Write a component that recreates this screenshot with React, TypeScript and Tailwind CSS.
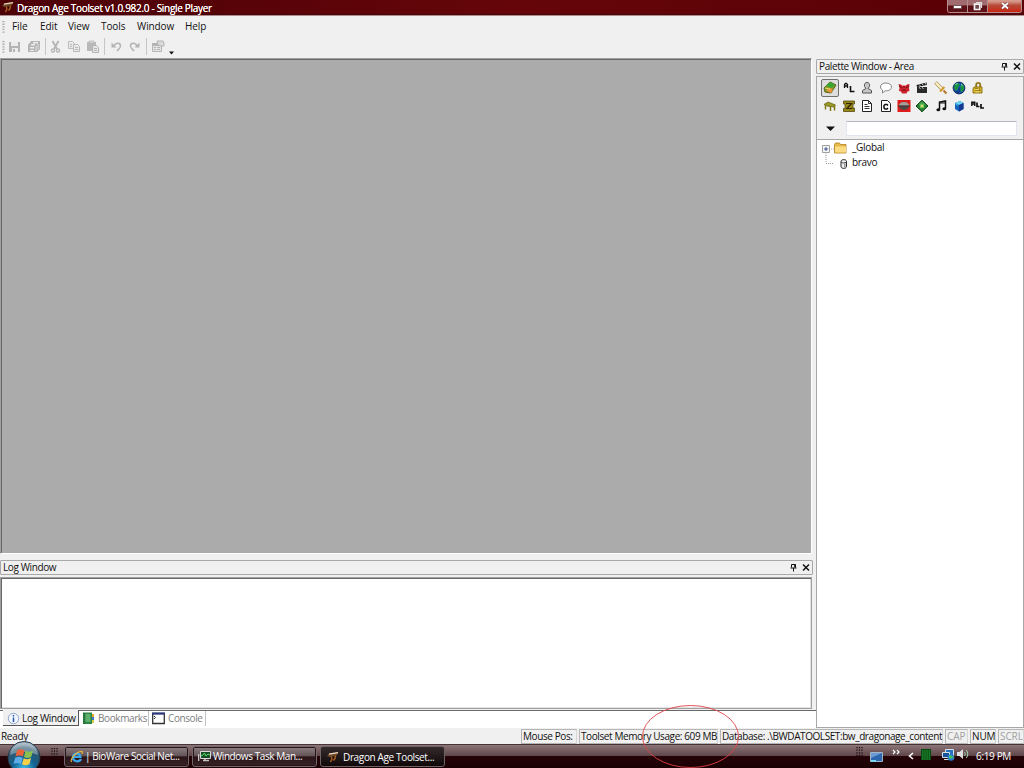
import React from 'react';
import clsx from 'clsx';

type IconProps = { children: React.ReactNode; w?: number; h?: number; className?: string };

const Svg: React.FC<IconProps> = ({ children, w = 14, h = 14, className }) => (
    <svg width={w} height={h} viewBox={`0 0 ${w} ${h}`} className={clsx('block shrink-0', className)} fill="none">
        {children}
    </svg>
);

const DragonIcon = () => (
    <Svg w={12} h={12}>
        <path d="M0 5 2 2.5 11.5 1 10 4 7 5.5 3 6z" fill="#6e4a2a" />
        <path d="M2 3.2 11 1.6" stroke="#ecd9c2" strokeWidth="1.3" />
        <path d="M4.500 5.500 5 8l-1.500 3M8.500 4.500 8 7.500 6.500 9.500" stroke="#b0621f" strokeWidth="1.4" />
        <path d="M6 5 6.500 8" stroke="#2b1208" strokeWidth="1.2" />
    </Svg>
);

/* ---------- title bar ---------- */

const TitleBar = () => (
    <header className="flex h-4 shrink-0 justify-between border-b border-[#b08a8c] bg-linear-to-r from-[#4c0207] via-[#650509] to-[#590106] shadow-[inset_0_-1px_0_#42070a]">
        <div className="flex items-start gap-[3px] pl-[2px] pt-px">
            <DragonIcon />
            <span className="whitespace-nowrap text-[10px] leading-[14px] tracking-[-0.3px] text-white [text-shadow:0_0_.4px_#fff]">Dragon Age Toolset v1.0.982.0 - Single Player</span>
        </div>
        <div className="mr-[2px] flex h-[13px] overflow-hidden rounded-b-[3px] border border-t-0 border-[#b58d8f]">
            <div className="flex w-5 items-end justify-center border-r border-[#b58d8f] bg-linear-to-b from-[#a16c70] from-40% to-[#5c1116] to-50% pb-[3px]">
                <div className="h-[4px] w-[9px] rounded-[1px] border border-[#73565a] bg-white" />
            </div>
            <div className="flex w-5 items-center justify-center border-r border-[#b58d8f] bg-linear-to-b from-[#a16c70] from-40% to-[#5c1116] to-50%">
                <Svg w={10} h={10}>
                    <path d="M3 1.500h5.500v5.500" stroke="#ddd" strokeWidth="1.2" />
                    <path d="M1.500 3.200h5.300v5.300H1.500z" fill="#6d4a4d" stroke="#f4f4f4" strokeWidth="1.7" />
                </Svg>
            </div>
            <div className="flex w-[33px] items-center justify-center bg-linear-to-b from-[#d59a8c] from-10% via-[#b54937] via-45% to-[#c9200b]">
                <Svg w={10} h={10}>
                    <path d="m2 2 6 5.500M8 2 2 7.500" stroke="#5f3435" strokeWidth="3" />
                    <path d="m2 2 6 5.500M8 2 2 7.500" stroke="#fff" strokeWidth="1.8" />
                </Svg>
            </div>
        </div>
    </header>
);

/* ---------- menu and toolbar ---------- */

const Grip = () => (
    <Svg w={3} h={14}>
        <path d="M1.500 1v12" stroke="#a8a8a8" strokeWidth="2" strokeDasharray="1.3 1.3" />
    </Svg>
);

const MENUS = [
    { label: 'File', width: 'w-[28px]' },
    { label: 'Edit', width: 'w-[28px]' },
    { label: 'View', width: 'w-[33px]' },
    { label: 'Tools', width: 'w-9' },
    { label: 'Window', width: 'w-12' },
    { label: 'Help', width: 'w-8' },
];

const MenuBar = () => (
    <nav className="flex h-[21px] shrink-0 items-center pl-[2px]">
        <Grip />
        <div className="ml-[7px] flex">
            {MENUS.map(m => (
                <span key={m.label} className={clsx(m.width, 'whitespace-nowrap text-[10px] tracking-[-0.1px]')}>{m.label}</span>
            ))}
        </div>
    </nav>
);

const Sep = () => <div className="h-[17px] w-px bg-[#c6c6c6]" />;

const ToolBar = () => (
    <div className="flex h-[21px] shrink-0 items-center pb-[2px] pl-[2px]">
        <Grip />
        <div className="ml-[3px] flex w-[37px] gap-[5px] opacity-85">
            <Svg>
                <path d="M1 2h11v10H1z" fill="#aaa" />
                <path d="M3 2h7v4H3zM4 8h6v4H4z" fill="#ececec" />
                <path d="M5 9h2v3H5z" fill="#aaa" />
            </Svg>
            <Svg>
                <path d="M4 1h9v8l-3 3H1V5z" fill="#aaa" />
                <path d="M6 2h5v1.5H6zM4 4h4v1.5H4zM3 7h4v1.5H3zM3 10h4v1H3z" fill="#ededed" />
                <path d="M9 6v5M11 4v5" stroke="#ddd" />
            </Svg>
        </div>
        <Sep />
        <div className="ml-[3px] flex w-[55px] gap-[4px] opacity-85">
            <Svg>
                <path d="m3.500 1 4.500 8M9.500 1 5 9" stroke="#aaa" strokeWidth="1.8" />
                <circle cx="4" cy="10.500" r="1.600" stroke="#aaa" strokeWidth="1.400" />
                <circle cx="9" cy="10.500" r="1.600" stroke="#aaa" strokeWidth="1.400" />
            </Svg>
            <Svg>
                <path d="M1.500 1.500h4l2 2v5h-6z" fill="#e8e8e8" stroke="#b5b5b5" />
                <path d="M6.500 4.500h4l2 2v5h-6z" fill="#e8e8e8" stroke="#b0b0b0" />
                <path d="M8 7.500h3M8 9.500h3M3 4.500h2M3 6.500h2" stroke="#b0b0b0" />
            </Svg>
            <Svg className="ml-px">
                <path d="M1 2h9v9H1z" fill="#b0b0b0" />
                <path d="M3 1h5v2H3z" fill="#d5d5d5" stroke="#aaa" strokeWidth=".6" />
                <path d="M6.500 5.500h4l2 2v5h-6z" fill="#e4e4e4" stroke="#a8a8a8" />
                <path d="M8 8.500h3M8 10.500h3" stroke="#aaa" />
            </Svg>
        </div>
        <Sep />
        <div className="ml-[5px] flex w-[36px] gap-[4px] opacity-85">
            <Svg>
                <path d="M4 6c1-3 6-4 6.500-.5C11 8 8.500 9 7 11" stroke="#aaa" strokeWidth="1.600" />
                <path d="M1.500 2.500v5h5z" fill="#aaa" />
            </Svg>
            <Svg>
                <path d="M9 6C8 3 3 2 2.500 5.500 2 8 4.500 9 6 11" stroke="#aaa" strokeWidth="1.600" />
                <path d="M11.500 2.500v5h-5z" fill="#aaa" />
            </Svg>
        </div>
        <Sep />
        <div className="ml-1 flex items-end gap-1">
            <Svg className="opacity-85">
                <path d="M1.500 4.500h9v7h-9z" fill="#e3e3e3" stroke="#aaa" />
                <path d="M1 3h7v3H1z" fill="#aaa" />
                <path d="M6 1h6l1 2v3H9L7 5z" fill="#d6d6d6" stroke="#aaa" />
                <path d="M3 7.500h2M6 7.500h3M3 9.500h2M6 9.500h3" stroke="#aaa" />
            </Svg>
            <Svg w={6} h={4} className="-mb-px">
                <path d="M0 .5h5L2.500 3.500z" fill="#111" />
            </Svg>
        </div>
    </div>
);

/* ---------- docked windows ---------- */

const DockTitle: React.FC<{ title: string }> = ({ title }) => (
    <div className="flex h-[15px] shrink-0 items-center justify-between rounded-[1px] border border-[#a9a9a9] bg-[#f0f0f0] pl-[2px] pr-[2px]">
        <span className="whitespace-nowrap text-[10px] leading-[13px] tracking-[-0.38px]">{title}</span>
        <div className="flex gap-[5px]">
            <Svg w={7} h={9}>
                <path d="M1.500 1.500h4v3M1.500 1.500v3M.5 5h6M3.500 5v3.500" stroke="#111" />
                <path d="M4.900 1.500v3" stroke="#111" strokeWidth="1.400" />
            </Svg>
            <Svg w={8} h={9}>
                <path d="m1 1.500 6 6M7 1.500l-6 6" stroke="#111" strokeWidth="1.500" />
            </Svg>
        </div>
    </div>
);

const TABS = [
    {
        label: 'Log Window', width: 'w-[76px]', active: true,
        icon: (
            <Svg w={13} h={13}>
                <circle cx="6.500" cy="6.500" r="5.200" fill="#f2f7fd" stroke="#8ea6cc" />
                <path d="M6.500 3v1.500M6.500 5.500V10" stroke="#2a57ae" strokeWidth="1.500" />
            </Svg>
        ),
    },
    {
        label: 'Bookmarks', width: 'w-[70px]', active: false,
        icon: (
            <Svg w={13} h={13}>
                <path d="M9 2h3v3H9z" fill="#e9a62c" />
                <path d="M9 5h3v3H9z" fill="#3b74c0" />
                <path d="M9 8h3v3H9z" fill="#d4d04a" />
                <path d="M1 .5h9v11.500H1z" fill="#2f8546" />
                <path d="M3.500 2h5v8h-5z" fill="#5eae6c" />
                <path d="M2 1v11" stroke="#164f28" strokeDasharray="1 1" />
            </Svg>
        ),
    },
    {
        label: 'Console', width: 'w-[57px]', active: false,
        icon: (
            <Svg w={13} h={13}>
                <path d="M.7 1.500h11.600v10H.7z" fill="#fff" stroke="#333" strokeWidth="1.300" />
                <path d="M0 1.500h13" stroke="#28357f" strokeWidth="2" />
                <path d="m2 4 1.500 1.500L2 7" stroke="#333" />
            </Svg>
        ),
    },
];

const LogWindow = () => (
    <section className="flex h-[168px] shrink-0 flex-col">
        <div className="-mr-px">
            <DockTitle title="Log Window" />
        </div>
        <div className="mt-[2px] h-[132px] shrink-0 border border-[#a0a0a0] bg-white shadow-[inset_1px_1px_0_#696969,inset_-1px_-1px_0_#e3e3e3]" />
        <div className="-mr-1 mt-px flex h-[18px] bg-white pl-[3px] shadow-[inset_0_1px_0_#696969]">
            {TABS.map(t => (
                <div
                    key={t.label}
                    className={clsx(
                        t.width,
                        'flex items-center whitespace-nowrap text-[10px]',
                        t.active
                            ? 'h-4 gap-[2px] border-r border-b border-[#555] bg-[#f0f0f0] pl-[4px] pt-px tracking-[-0.33px]'
                            : 'mt-px h-[15px] gap-[3px] border-r border-[#c2c2c2] pl-[3px] tracking-[-0.4px] text-[#808080]',
                    )}
                >
                    {t.icon}
                    <span>{t.label}</span>
                </div>
            ))}
        </div>
    </section>
);

/* ---------- palette ---------- */

const PALETTE_ICONS: React.ReactNode[] = [
    <>
        <path d="m1 7 6-6 6 3-5 8-6-1z" fill="#8a9b25" stroke="#596318" />
        <path d="m3 5 4-4 5 3-3 3z" fill="#39a833" />
        <path d="m4 8 4-1 2 2-2 3-4-2z" fill="#ec923c" />
        <path d="m2 7 5 1" stroke="#d9df6f" />
    </>,
    <>
        <path d="M2.500 7V3.500l1-1h1l1 1V7M2.500 5h3" stroke="#111" strokeWidth="1.300" />
        <path d="M8.500 5v5.500h4" stroke="#111" strokeWidth="1.600" />
    </>,
    <>
        <path d="M7 1.500c-2 0-3 1.500-2.500 4L6 7.500l-3.500 2v2.500h9V9.500L8 7.500l1.500-2C10 3 9 1.500 7 1.500z" fill="#c7c7c7" stroke="#555" />
    </>,
    <>
        <path d="M7 2C3.500 2 1.500 3.500 1.500 6c0 1.500 1 2.500 2 3v3L6 9.800c4 .2 6.500-1.300 6.500-3.800S10 2 7 2z" fill="#fff" stroke="#858585" />
    </>,
    <>
        <path d="m1.500 3 2.500.5 2 1.500 1-1 1 1 2-1.500 2.500-.5-.5 4 .5 3-2 .5-1 2H5l-1-2-2-.5.500-3z" fill="#d0222c" />
        <path d="m2 5 3 2M12 5 9 7M5 10l2-1.500L9 10M7 5v2" stroke="#6e1015" />
    </>,
    <>
        <path d="M2 6h10v6H2z" fill="#292929" />
        <path d="m1.500 4 10-2.500.5 2.500-10 2z" fill="#171717" />
        <path d="m4 3.500 1.500 1.500M7 2.800l1.500 1.500M10 2l1 1.500M4 6.500l1.500 1M7 6.500l1.500 1" stroke="#ddd" />
    </>,
    <>
        <path d="m1.500 1.500 7 7" stroke="#a98b4c" strokeWidth="3.400" />
        <path d="m1.800 1.800 6.700 6.700" stroke="#fff6cc" strokeWidth="2" />
        <path d="m6 10.500 4.500-4.500" stroke="#d09a2c" strokeWidth="2" />
        <path d="m9.500 9.500 3 3" stroke="#b5742a" strokeWidth="2" />
    </>,
    <>
        <circle cx="7" cy="7" r="5.900" fill="#1450ad" stroke="#0d2350" strokeWidth=".9" />
        <path d="m3 3 3-1 2 2-2 2v2L4 10 2 7zM9 2l3 3v3l-2 3-2-1 1-2-1-2 1-1z" fill="#1c963b" />
        <path d="m3.500 3.500 2-1M9 3.500l1.500 1" stroke="#9fe0e2" />
        <path d="M7 7v4M4 10l3 2" stroke="#0c2d75" />
    </>,
    <>
        <path d="M5.200 6V3.800c0-2.600 4-2.600 4 0V6" stroke="#94791a" strokeWidth="1.900" />
        <path d="M3 6h8v6H2V8z" fill="#dcb928" stroke="#81690f" strokeWidth=".9" />
        <path d="M4 7.500h3M4 9.500h6M8.500 7v5" stroke="#8f7416" strokeWidth=".8" />
        <path d="M4.500 8.500h3M4.500 10.800h5" stroke="#f5e989" strokeWidth=".8" />
    </>,
    <>
        <path d="m1 5.500 4-2.500 7.500 3L11 8 4 7z" fill="#9b9826" stroke="#696313" strokeWidth=".8" />
        <path d="M2.500 6v4.500M7.500 7v5M11.500 7v4.500" stroke="#7f7a14" strokeWidth="1.500" />
    </>,
    <>
        <path d="M1.500 2h11v3H11v4h1.500v3.500h-11V9.500H3V5H1.500z" fill="#96861b" stroke="#574d0d" strokeWidth=".8" />
        <path d="M4 4.500h5.500L5 9.500h5.500" stroke="#332b05" strokeWidth="1.200" />
    </>,
    <>
        <path d="M2.500 1.500h6l3 3v8h-9z" fill="#fff" stroke="#222" />
        <path d="M8.500 1.500v3h3M4.500 5.500h3M4.500 7.500h5M4.500 9.500h5" stroke="#333" />
    </>,
    <>
        <path d="M2.500 1.500h6l3 3v8h-9z" fill="#fff" stroke="#222" />
        <path d="M9 6.500 8 5.500H6L5 6.500V9l1 1h2l1-1" stroke="#111" strokeWidth="1.500" />
    </>,
    <>
        <path d="M.5 1h13v12H.5z" fill="#df1c1b" />
        <path d="M2 7c0-3 2-4 5-4s5 1 5 4z" fill="#a49b98" />
        <path d="M2 7h10c0 2-2 4-5 4S2 9 2 7z" fill="#514744" />
        <path d="M1 7h12" stroke="#372a28" />
    </>,
    <>
        <path d="m7 1.200 6 5.800-6 5.800L1 7z" fill="#277e32" stroke="#0d4a18" />
        <path d="m3.500 5.500 3.500-3 3.500 3L7 7z" fill="#3fa14c" />
        <path d="M4.800 4.800h4.400v4.400H4.800z" fill="#6cc25a" />
        <path d="M6 6h2v2H6z" fill="#e5dd6a" />
    </>,
    <>
        <path d="M5.500 10.500V3.200l6-1.200v7.500" stroke="#111" strokeWidth="1.500" />
        <path d="M5 4h7" stroke="#111" />
        <ellipse cx="4.300" cy="10.700" rx="1.900" ry="1.500" fill="#111" />
        <ellipse cx="10.300" cy="9.700" rx="1.900" ry="1.500" fill="#111" />
    </>,
    <>
        <path d="m3 4 5-2 3.500 2v6L7 12.500 3 10z" fill="#1565bd" />
        <path d="m3 4 5-2 3.500 2L7 6z" fill="#6ed6f2" />
        <path d="m7 6 4.500-2v6L7 12.500z" fill="#163a91" />
        <path d="M3.500 5 6 6.500" stroke="#45b8ea" />
    </>,
    <>
        <path d="M.8 7V3.200h3V7M.8 5h3" stroke="#111" strokeWidth="1.400" />
        <path d="M6 3.500v4h2.500M10 5v4h3" stroke="#111" strokeWidth="1.700" />
    </>,
];

const PalettePanel = () => (
    <aside className="flex w-[208px] shrink-0 flex-col pt-px">
        <DockTitle title="Palette Window - Area" />
        <div className="mt-[2px] flex min-h-0 flex-1 flex-col border border-[#a7a7a7]">
            <div className="h-[63px] shrink-0 border-b border-[#a7a7a7] pl-1 pt-[2px]">
                <div className="grid w-[166px] grid-cols-9">
                    {PALETTE_ICONS.map((icon, i) => (
                        <div
                            key={i}
                            className={clsx('flex h-[18px] items-center justify-center', i === 0 && 'rounded-[2px] border border-[#6f6f6f] bg-[#dedede]')}
                        >
                            <Svg>{icon}</Svg>
                        </div>
                    ))}
                </div>
                <div className="mt-[6px] flex items-center pl-[5px]">
                    <Svg w={9} h={5}>
                        <path d="M0 .5h9L4.500 5z" fill="#111" />
                    </Svg>
                    <div className="ml-[11px] h-[15px] w-[171px] border border-[#e1e5ee] border-t-[#b4b9c4] bg-white" />
                </div>
            </div>
            <div className="flex-1 bg-white pl-[5px] text-[10px] tracking-[-0.3px]">
                <div className="flex h-[15px] items-center">
                    <Svg w={12} h={15}>
                        <path d="M.5 5.500h7v7h-7z" fill="#f5f5f5" stroke="#a0a0a0" />
                        <path d="M2 9h4M4 7v4" stroke="#3d548e" />
                        <path d="M9 9h3M4 13.500V15" stroke="#aaa" strokeDasharray="1 1" />
                    </Svg>
                    <Svg w={13} h={12} className="mt-px">
                        <path d="M.5 2.500 1.500 1h4l1 1.500h5.500v8.500H.5z" fill="#e9b94b" stroke="#ac7e20" strokeWidth=".8" />
                        <path d="M1 4.500h11v6H1z" fill="#fbdc82" />
                    </Svg>
                    <span className="ml-[5px] leading-[15px]">_Global</span>
                </div>
                <div className="flex h-[15px] items-center">
                    <Svg w={12} h={15}>
                        <path d="M4 0v8M4 8.500h8" stroke="#999" strokeDasharray="1 1" />
                    </Svg>
                    <Svg w={13} h={12} className="mt-[2px]">
                        <path d="M7 3.500c0-2.500 5.500-2.500 5.500 0v5c0 2.500-5.500 2.500-5.500 0z" fill="#eee" stroke="#222" />
                        <path d="M7 4c2 1.300 3.500 1.300 5.500 0" stroke="#444" />
                        <path d="M10.800 5.500v4" stroke="#999" strokeWidth="1.500" />
                    </Svg>
                    <span className="ml-[5px] leading-[15px]">bravo</span>
                </div>
            </div>
        </div>
    </aside>
);

/* ---------- status bar ---------- */

const STATUS = [
    { text: 'Mouse Pos:', cls: 'w-14 tracking-[-0.4px]' },
    { text: 'Toolset Memory Usage: 609 MB', cls: 'w-[139px] tracking-[-0.4px]' },
    { text: 'Database: .\\BWDATOOLSET:bw_dragonage_content', cls: 'w-[223px] tracking-[-0.42px]' },
    { text: 'CAP', cls: 'w-[23px] text-[#a0a0a0]' },
    { text: 'NUM', cls: 'w-[26px] tracking-[-0.1px]' },
    { text: 'SCRL', cls: 'w-[26px] tracking-[-0.1px] text-[#a0a0a0]' },
];

const StatusBar = () => (
    <div className="flex h-4 shrink-0 items-center justify-between bg-[#f0f0f0] text-[10px]">
        <span className="pl-px tracking-[-0.3px]">Ready</span>
        <div className="flex gap-[2px]">
            {STATUS.map(s => (
                <div key={s.text} className={clsx('h-[15px] shrink-0 whitespace-nowrap border border-[#b5b5b5] border-r-[#d5d5d5] pl-px leading-[13px]', s.cls)}>
                    {s.text}
                </div>
            ))}
        </div>
    </div>
);

/* ---------- taskbar ---------- */

const StartOrb = () => (
    <svg width="36" height="28" viewBox="0 0 36 28" className="absolute -top-[4px] left-[6px]">
        <defs>
            <radialGradient id="orb" cx=".5" cy=".85" r=".8">
                <stop offset="0" stopColor="#3cbdee" />
                <stop offset=".45" stopColor="#12628e" />
                <stop offset=".8" stopColor="#31556d" />
                <stop offset="1" stopColor="#9eb1bd" />
            </radialGradient>
        </defs>
        <circle cx="18" cy="16.500" r="16" fill="url(#orb)" stroke="#273a49" />
        <path d="M4 14C5 5 12 2 18 2s13 3 14 12c-9-4-19-4-28 0z" fill="#dce8ee" opacity=".4" />
        <path d="M11 9.500c3-2 5-1.500 7.500-.3L17 15.500c-2.500-1.300-5-1.300-7.500 0z" fill="#e8633a" />
        <path d="M19.500 9.800c2.500 1.200 5 1.200 7.500-.3l-1.700 6.300c-2.500 1.500-5 1.500-7.300.3z" fill="#8dc14f" />
        <path d="M9.200 16.800c2.500-1.300 5-1.300 7.500 0L15 23c-2.500-1.300-5-1.300-7.500 0z" fill="#5eabe8" />
        <path d="M17.700 17.300c2.500 1.200 5 1.200 7.400-.2L23.500 23c-2.500 1.500-5 1.500-7.500.3z" fill="#f7cf48" />
    </svg>
);

const Dots = () => (
    <Svg w={7} h={17} className="mt-[2px]">
        <path d="M1 0v17M3.500 0v17M6 0v17" stroke="#180a0c" strokeWidth="1.200" strokeDasharray="1.200 1.400" />
    </Svg>
);

const TASKS = [
    {
        label: '| BioWare Social Net...', active: false,
        icon: (
            <Svg w={13} h={13}>
                <path d="M11 9c-1.500 3.500-8 3-8-1.500S9.500 2 10.500 7H4" stroke="#3aa7ec" strokeWidth="2.200" />
                <path d="M1.500 12C-.5 9 7 1 12 1.500c1 1-.3 2.500-.3 2.500" stroke="#f1ba3a" strokeWidth="1.100" />
            </Svg>
        ),
    },
    {
        label: 'Windows Task Man...', active: false,
        icon: (
            <Svg w={13} h={13}>
                <path d="M2.500 1.500h10v7h-10z" fill="#184a25" stroke="#d8d8d8" />
                <path d="m3 6 2-1 1.500-2L8 6l2-2 2 1" stroke="#56e267" />
                <path d="M5 10.500h6M.5 4v7M7 9v2" stroke="#c4c4c4" strokeWidth="1.600" />
            </Svg>
        ),
    },
    { label: 'Dragon Age Toolset...', active: true, icon: <DragonIcon /> },
];

const Tray = () => (
    <div className="flex h-full items-start text-white">
        <Dots />
        <Svg w={14} h={13} className="ml-[7px] mt-[6px]">
            <path d="M.5 1.500h12v9H.5z" fill="#2c66ae" stroke="#a3b6c8" />
            <path d="M1 2h11L1 7z" fill="#6a9bd2" />
            <path d="M1 10h5" stroke="#79d7f4" strokeWidth="2" />
        </Svg>
        <Svg w={9} h={7} className="ml-[8px] mt-[4px]">
            <path d="m1 1 2 2-2 2M5 1l2 2-2 2" stroke="#fff" strokeWidth="1.200" />
        </Svg>
        <Svg w={6} h={8} className="ml-[7px] mt-[7px]">
            <path d="M5 1 1.500 4 5 7" stroke="#fff" strokeWidth="1.600" />
        </Svg>
        <Svg w={10} h={11} className="ml-[7px] mt-[4px]">
            <path d="M0 0h10v11H0z" fill="#0b4714" />
            <path d="M1 2h8M1 4h8M1 6h8M1 8h8M1 10h8" stroke="#24a735" strokeDasharray="1.500 .7" />
        </Svg>
        <Svg w={13} h={12} className="ml-[11px] mt-[4px]">
            <path d="M3.500.5h8v6h-8z" fill="#2972c1" stroke="#d6e2e9" />
            <path d="M.5 3.500h7v5h-7z" fill="#18529b" stroke="#d6e2e9" />
            <path d="M2 10.500h5" stroke="#d6e2e9" />
            <circle cx="9" cy="8.500" r="3.300" fill="#2679d3" />
            <path d="m7 7 2-1 1 2-1 2-2-1zM10 7l2 1-1 2z" fill="#4acb57" />
        </Svg>
        <Svg w={12} h={12} className="ml-[2px] mt-[3px]">
            <path d="M0 4h2.500L6 1v10L2.500 8H0z" fill="#dedede" />
            <path d="M7.500 4c1 1 1 3 0 4M9.300 2c2 2.500 2 5.500 0 8" stroke="#9fd6ab" />
        </Svg>
        <span className="ml-[7px] mr-[13px] mt-[4px] whitespace-nowrap text-[10px] leading-[14px] tracking-[-0.35px]">6:19 PM</span>
    </div>
);

const TaskBar = () => (
    <footer className="relative flex h-6 shrink-0 justify-between border-t border-[#453539] bg-[linear-gradient(to_bottom,#8c7477_0,#5e464a_47%,#250307_50%,#190002_100%)]">
        <StartOrb />
        <div className="flex pl-[51px] pt-px">
            <Dots />
            <div className="ml-[6px] flex gap-[3px]">
                {TASKS.map(t => (
                    <div
                        key={t.label}
                        className={clsx(
                            'flex h-[21px] w-[125px] items-center whitespace-nowrap rounded-[3px] border text-[10px] text-white',
                            t.active
                                ? 'gap-[4px] border-[#6e6265] bg-linear-to-b from-[#332b2c] to-[#100809] pl-[6px] pt-px tracking-[-0.36px]'
                                : 'gap-[2px] border-[#76656a] bg-[linear-gradient(to_bottom,#8d8083_0,#645457_46%,#2b1417_52%,#362326_100%)] pl-[5px] tracking-[-0.43px] shadow-[inset_0_0_0_1px_#251719]',
                        )}
                    >
                        {t.icon}
                        <span>{t.label}</span>
                    </div>
                ))}
            </div>
        </div>
        <Tray />
    </footer>
);

export default function App() {
    return (
        <div className="relative flex h-[768px] w-[1024px] flex-col overflow-hidden bg-[#f0f0f0] font-['Open_Sans','Noto_Sans',sans-serif] text-[#111]">
            <TitleBar />
            <MenuBar />
            <ToolBar />
            <div className="flex min-h-0 flex-1 gap-1">
                <main className="flex min-w-0 flex-1 flex-col">
                    <div className="mb-1.5 flex-1 border border-[#a0a0a0] border-r-white border-b-white bg-[#ababab] shadow-[inset_1px_1px_0_#696969]" />
                    <LogWindow />
                </main>
                <PalettePanel />
            </div>
            <StatusBar />
            <TaskBar />

            {/* hand-drawn highlight around the memory readout */}
            <svg width="100" height="64" className="pointer-events-none absolute left-[641px] top-[704px]" fill="none">
                <ellipse cx="49.500" cy="32.500" rx="48" ry="31" stroke="#e04248" strokeWidth=".9" />
            </svg>
        </div>
    );
}
